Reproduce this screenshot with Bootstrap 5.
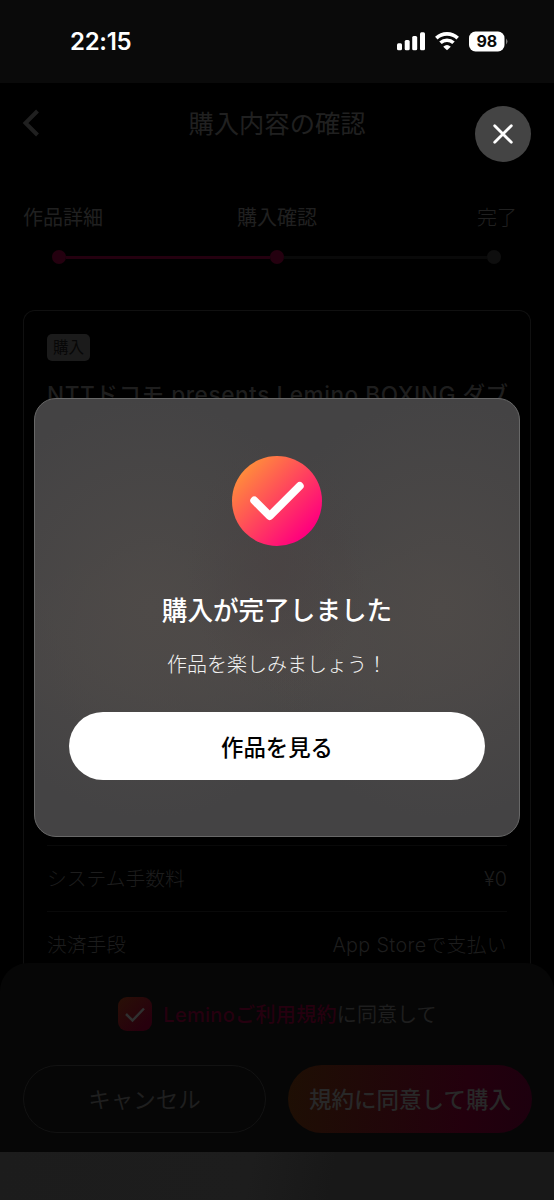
<!DOCTYPE html>
<html lang="ja">
<head>
<meta charset="utf-8">
<meta name="viewport" content="width=device-width, initial-scale=1">
<title>購入内容の確認</title>
<link href="https://cdn.jsdelivr.net/npm/bootstrap@5.3.0/dist/css/bootstrap.min.css" rel="stylesheet">
<style>
  body { background: #000; font-family: Inter, "Noto Sans CJK JP", sans-serif; font-size: 20px; line-height: 28px; color: #1e1e1e; }
  .screen { width: 554px; height: 1200px; background: #000; }
  .statusbar { height: 83px; background: #0a0a0a; color: #fff; padding: 0 46px 0 70px; }
  .clock { font-size: 24px; font-weight: 600; letter-spacing: -.3px; }
  .page-head { height: 80px; padding-left: 22px; }
  .page-title { font-size: 25.3px; font-weight: 400; color: #202020; padding-top: 2px; }
  .steps { padding: 41px 23px 0; height: 147px; }
  .step-names { height: 28px; padding-right: 14px; font-weight: 400; color: #202020; white-space: nowrap; }
  .step-names .now { margin-left: 134px; }
  .step-track { width: 449px; margin: 18px 0 0 29px; height: 14px; }
  .dot { width: 14px; height: 14px; border-radius: 50%; background: #0e0e0e; }
  .dot.on { background: #24000f; }
  .bar { height: 3px; background: #090909; }
  .bar.on { background: #24000f; }
  .order { margin: 0 23px; height: 660px; border: 1px solid #101010; border-bottom: 0; border-radius: 12px 12px 0 0; padding: 23px 23px 0; }
  .tag { width: 43px; height: 27px; border-radius: 5px; background: #1b1b1b; color: #070707; font-size: 15.5px; line-height: 28px; text-align: center; }
  .work { font-size: 22.6px; font-weight: 500; letter-spacing: .55px; line-height: 32px; margin-top: 18px; height: 466px; }
  .fee { height: 66px; border-top: 1px solid #090909; font-size: 19.8px; color: #1d1d1d; font-weight: 300; }
  .fee .pay { letter-spacing: .35px; }
  .sheet { left: 0; right: 0; top: 963px; height: 189px; background: #060606; border-radius: 28px 28px 0 0; padding: 34px 22px 0 23px; }
  .agree { gap: 11px; height: 34px; }
  .agree .words { font-size: 20.1px; padding-top: 2px; }
  .agree .terms { color: #25000f; font-weight: 500; letter-spacing: .25px; }
  .pair { margin-top: 34px; }
  .pill { height: 68px; border-radius: 34px; font-size: 22.5px; font-weight: 400; padding: 2px 0 0; }
  .cancel { width: 243px; border: 1px solid #121212; color: #1f1f1f; }
  .buy { width: 244px; background: linear-gradient(95deg, #1e0f04, #23000d 72%, #1d000e); color: #282828; font-weight: 500; }
  .home { left: 0; right: 0; bottom: 0; height: 48px; background: linear-gradient(100deg, #1c1c1c, #1d1d1d 45%, #181818 60%); }
  .close { right: 23px; top: 106px; width: 56px; height: 56px; border-radius: 50%; background: #444; }
  .dialog { left: 34px; top: 398px; width: 486px; height: 439px; border-radius: 22px; border: 1px solid #686868;
    background:
      radial-gradient(ellipse 90px 130px at 50% 38%, rgba(73,67,67,.9), rgba(73,67,67,0)),
      radial-gradient(ellipse 190px 210px at 24% 48%, #4e4a48, rgba(78,74,72,0)),
      radial-gradient(ellipse 190px 210px at 84% 48%, #4e4a48, rgba(78,74,72,0)),
      radial-gradient(ellipse 290px 110px at 50% 56%, #4e4a48, rgba(78,74,72,0)), #444344;
    color: #fff; padding: 57px 34px 0; }
  .done { font-size: 25.6px; font-weight: 500; line-height: 36px; margin-top: 47px; }
  .enjoy { font-weight: 300; font-size: 20px; margin-top: 22px; color: #f2f2f2; }
  .view { height: 68px; border-radius: 34px; background: #fff; color: #000; font-size: 22.4px; font-weight: 500; margin-top: 33px; padding: 3px 0 0; }
  .view:hover { background: #fff; color: #000; }
</style>
</head>
<body>
<div class="screen position-relative overflow-hidden">
  <header class="statusbar d-flex justify-content-between align-items-center">
    <span class="clock">22:15</span>
    <div class="d-flex align-items-center">
      <svg width="111" height="22" viewBox="0 0 111 22" fill="#fff">
        <rect x="0" y="12.3" width="5" height="7" rx="1.5"/><rect x="7.7" y="9" width="5" height="10.3" rx="1.5"/>
        <rect x="15.2" y="5.1" width="5" height="14.2" rx="1.5"/><rect x="23" y="1.3" width="5" height="18" rx="1.5"/>
        <g fill="none" stroke="#fff" stroke-width="3.6"><path d="M39.3 7.1a15.6 15.6 0 0 1 21.4 0"/><path d="M43.5 11.8a9.4 9.4 0 0 1 13 0"/></g>
        <path d="M46.2 15.8q3.8-3.4 7.6 0L50 19.3z"/>
        <rect x="72" y=".5" width="35.5" height="20" rx="6.5"/><path d="M109 7.5v6q3-3 0-6z" fill="#777"/>
        <text x="89.8" y="16.2" text-anchor="middle" font-family="Inter, sans-serif" font-size="16" font-weight="700" fill="#0a0a0a">98</text>
      </svg>
    </div>
  </header>

  <div class="page-head d-flex align-items-center position-relative">
    <svg width="18" height="28" viewBox="0 0 18 28" fill="none" stroke="#202020" stroke-width="4"><path d="M15.5 2 3.5 14l12 12"/></svg>
    <h1 class="page-title position-absolute start-0 end-0 text-center m-0">購入内容の確認</h1>
  </div>

  <section class="steps">
    <div class="step-names d-flex"><span>作品詳細</span><span class="now">購入確認</span><span class="fw-light ms-auto">完了</span></div>
    <div class="step-track d-flex align-items-center">
      <span class="dot on"></span><span class="bar on flex-fill"></span><span class="dot on"></span><span class="bar flex-fill"></span><span class="dot"></span>
    </div>
  </section>

  <main class="order">
    <div class="tag">購入</div>
    <div class="work text-nowrap">NTTドコモ presents Lemino BOXING ダブ</div>
    <div class="fee d-flex justify-content-between align-items-center"><span>システム手数料</span><span>¥0</span></div>
    <div class="fee d-flex justify-content-between align-items-center"><span>決済手段</span><span class="pay">App Storeで支払い</span></div>
  </main>

  <section class="sheet position-absolute">
    <div class="agree d-flex justify-content-center align-items-center">
      <svg width="34" height="34" viewBox="0 0 34 34"><defs><linearGradient id="boxFill" x1="0" y1="0" x2="1" y2="1"><stop stop-color="#291006"/><stop offset=".8" stop-color="#27000d"/></linearGradient></defs><rect width="34" height="34" rx="9" fill="url(#boxFill)"/><path d="m8 17 6.5 6.5L26 11.5" fill="none" stroke="#303030" stroke-width="2.5"/></svg>
      <span class="words"><span class="terms">Leminoご利用規約</span>に同意して</span>
    </div>
    <div class="pair d-flex justify-content-between">
      <button type="button" class="btn pill cancel">キャンセル</button>
      <button type="button" class="btn pill buy border-0">規約に同意して購入</button>
    </div>
  </section>
  <div class="home position-absolute"></div>

  <div class="close position-absolute d-flex align-items-center justify-content-center">
    <svg width="20" height="20" viewBox="0 0 20 20" stroke="#fff" stroke-width="2.8" stroke-linecap="round"><path d="m1.7 1.7 16.6 16.6M18.3 1.7 1.7 18.3"/></svg>
  </div>

  <div class="dialog position-absolute text-center">
    <svg class="d-block mx-auto" width="90" height="90" viewBox="0 0 90 90">
      <defs><linearGradient id="doneFill" x1=".1" y1=".15" x2=".83" y2=".85"><stop stop-color="#ff8f3a"/><stop offset="1" stop-color="#ff007d"/></linearGradient></defs>
      <circle cx="45" cy="45" r="45" fill="url(#doneFill)"/>
      <path d="M22.3 44.5 37.7 60 67.7 30" fill="none" stroke="#fff" stroke-width="8" stroke-linecap="round" stroke-linejoin="round"/>
    </svg>
    <h2 class="done mb-0">購入が完了しました</h2>
    <p class="enjoy mb-0">作品を楽しみましょう！</p>
    <button type="button" class="btn view w-100 border-0">作品を見る</button>
  </div>
</div>
<script src="https://cdn.jsdelivr.net/npm/bootstrap@5.3.0/dist/js/bootstrap.bundle.min.js"></script>
</body>
</html>
